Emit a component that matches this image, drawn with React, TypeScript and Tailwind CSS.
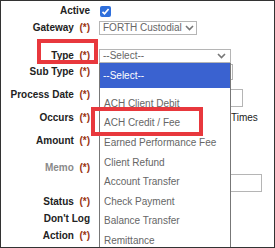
import React from 'react';

const req = <span className="text-[#9a3412]">(*)</span>;

function Row({ label, star = true, muted = false, mt, children }: { label: string; star?: boolean; muted?: boolean; mt: string; children?: React.ReactNode }) {
  return (
    <div className={`flex h-4 items-center ${mt}`}>
      <div className={`w-[89px] shrink-0 text-right font-bold whitespace-nowrap ${muted ? 'text-[#8a8a8a]' : 'text-[#222]'}`}>
        {label}
        {star && <>{'\u00a0\u00a0'}{req}</>}
      </div>
      <div className="ml-[9px] flex items-center">{children}</div>
    </div>
  );
}

function Chevron() {
  return (
    <svg width="9" height="6" viewBox="0 0 9 6" className="shrink-0">
      <path d="M1 1l3.5 3.5L8 1" fill="none" stroke="#777" strokeWidth="1.6" />
    </svg>
  );
}

export default function App() {
  const items = [
    'ACH Client Debit',
    'ACH Credit / Fee',
    'Earned Performance Fee',
    'Client Refund',
    'Account Transfer',
    'Check Payment',
    'Balance Transfer',
    'Remittance',
  ];

  return (
    <div
      className="relative h-[248px] w-[275px] overflow-hidden border border-[#333] bg-white text-[10px] leading-none"
      style={{ fontFamily: '"Liberation Sans", Arial, sans-serif' }}
    >
      <div className="pt-[2px]">
        <Row label="Active" star={false} mt="mt-0">
          <div className="ml-[1px] flex h-[11px] w-[11px] items-center justify-center rounded-[2px] bg-[#2f6fdc]">
            <svg width="9" height="9" viewBox="0 0 9 9">
              <path d="M1.5 4.8l2 2L7.6 2" fill="none" stroke="#fff" strokeWidth="1.7" />
            </svg>
          </div>
        </Row>
        <Row label="Gateway" mt="mt-[1px]">
          <div className="flex h-[14px] w-[98px] items-center justify-between border border-[#b5b5b5] pl-[3px] pr-[2px] text-[#666]">
            <span>FORTH Custodial</span>
            <Chevron />
          </div>
        </Row>
        <Row label="Type" mt="mt-[12px]">
          <div className="flex h-[14px] w-[132px] items-center justify-between border border-[#b5b5b5] pl-[3px] pr-[4px] text-[#666]">
            <span>--Select--</span>
            <Chevron />
          </div>
        </Row>
        <Row label="Sub Type" mt="mt-0">
          <div className="h-[16px] w-[134px] border border-[#b5b5b5]" />
        </Row>
        <Row label="Process Date" mt="mt-[7px]">
          <div className="mt-[6px] h-[18px] w-[144px] border border-[#b5b5b5]" />
        </Row>
        <Row label="Occurs" mt="mt-[7px]">
          <div className="h-[16px] w-[132px]" />
          <span className="text-[#222]">Times</span>
        </Row>
        <Row label="Amount" mt="mt-[7px]" />
        <Row label="Memo" muted mt="mt-[11px]">
          <div className="mt-[30px] h-[18px] w-[163px] border border-[#b5b5b5]" />
        </Row>
        <Row label="Status" mt="mt-[18px]" />
        <Row label="Don't Log" star={false} mt="mt-[1px]" />
        <Row label="Action" mt="mt-[1px]" />
      </div>

      {/* open select list */}
      <div className="absolute left-[98px] top-[62px] h-[200px] w-[132px] border-x border-[#777] bg-white">
        <div className="flex h-[25px] items-center bg-[#3a62d0] pl-[3px] text-white">--Select--</div>
        <div className="pt-[6px]">
          {items.map((it) => (
            <div key={it} className="flex h-[19.6px] items-center pl-[4px] text-[#666] whitespace-nowrap">
              {it}
            </div>
          ))}
        </div>
      </div>

      {/* annotations */}
      <div className="absolute left-[36px] top-[38px] h-[25px] w-[61px] border-4 border-[#e8383d]" />
      <div className="absolute left-[90px] top-[106px] h-[29px] w-[112px] border-4 border-[#e8383d]" />
    </div>
  );
}
